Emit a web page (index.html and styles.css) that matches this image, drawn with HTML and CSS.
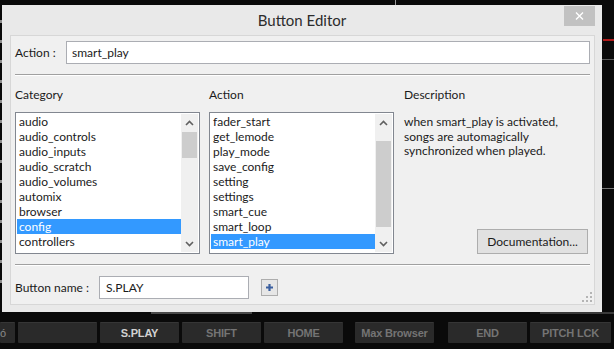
FILE: index.html
```html
<!DOCTYPE html>
<html lang="en">
  <head>
    <meta charset="UTF-8" />
    <meta name="viewport" content="width=device-width, initial-scale=1.0" />
    <title>Button Editor</title>
    <link rel="stylesheet" href="styles.css">
  </head>
  <body>
    <!-- bits of the skin visible behind the dialog -->
    <div class="skin-line skin-top"></div>
    <div class="skin-line skin-left"></div>
    <div class="skin-line skin-red"></div>
    <div class="skin-line skin-right-a"></div>
    <div class="skin-line skin-right-b"></div>
    <div class="skin-line skin-under-a"></div>
    <div class="skin-line skin-under-b"></div>

    <div class="dialog">
      <div class="titlebar">
        <span class="title">Button Editor</span>
        <button class="close" title="Close">
          <svg width="9" height="8" viewBox="0 0 9 8">
            <path d="M1 0.5 L8 7.5 M8 0.5 L1 7.5" stroke="#fff" stroke-width="1.4" fill="none" />
          </svg>
        </button>
      </div>

      <div class="panel">
        <div class="field-row">
          <label class="field-label action-label" for="action">Action :</label>
          <input class="text-input action-input" id="action" type="text" value="smart_play" />
        </div>

        <div class="divider"></div>

        <div class="columns">
          <div class="col">
            <div class="col-title">Category</div>
            <div class="listbox">
              <ul class="items">
                <li>audio</li>
                <li>audio_controls</li>
                <li>audio_inputs</li>
                <li>audio_scratch</li>
                <li>audio_volumes</li>
                <li>automix</li>
                <li>browser</li>
                <li class="selected">config</li>
                <li>controllers</li>
              </ul>
              <div class="scrollbar">
                <div class="scroll-btn">
                  <svg width="9" height="6" viewBox="0 0 9 6"><path d="M1 5 L4.5 1.5 L8 5" stroke="#606060" stroke-width="1.6" fill="none" /></svg>
                </div>
                <div class="scroll-track"><div class="thumb thumb-category"></div></div>
                <div class="scroll-btn">
                  <svg width="9" height="6" viewBox="0 0 9 6"><path d="M1 1 L4.5 4.5 L8 1" stroke="#606060" stroke-width="1.6" fill="none" /></svg>
                </div>
              </div>
            </div>
          </div>

          <div class="col">
            <div class="col-title">Action</div>
            <div class="listbox">
              <ul class="items">
                <li>fader_start</li>
                <li>get_lemode</li>
                <li>play_mode</li>
                <li>save_config</li>
                <li>setting</li>
                <li>settings</li>
                <li>smart_cue</li>
                <li>smart_loop</li>
                <li class="selected">smart_play</li>
              </ul>
              <div class="scrollbar">
                <div class="scroll-btn">
                  <svg width="9" height="6" viewBox="0 0 9 6"><path d="M1 5 L4.5 1.5 L8 5" stroke="#606060" stroke-width="1.6" fill="none" /></svg>
                </div>
                <div class="scroll-track"><div class="thumb thumb-action"></div></div>
                <div class="scroll-btn">
                  <svg width="9" height="6" viewBox="0 0 9 6"><path d="M1 1 L4.5 4.5 L8 1" stroke="#606060" stroke-width="1.6" fill="none" /></svg>
                </div>
              </div>
            </div>
          </div>

          <div class="col col-desc">
            <div class="col-title">Description</div>
            <p class="desc-text">when smart_play is activated,<br />songs are automagically<br />synchronized when played.</p>
            <button class="win-btn doc-btn">Documentation...</button>
          </div>
        </div>

        <div class="divider divider-bottom"></div>

        <div class="field-row name-row">
          <label class="field-label name-label" for="button-name">Button name :</label>
          <input class="text-input name-input" id="button-name" type="text" value="S.PLAY" />
          <button class="add-btn" title="Add">
            <svg width="9" height="9" viewBox="0 0 9 9"><path d="M4.5 1 V8 M1 4.5 H8" stroke="#3b5f9f" stroke-width="2.2" fill="none" /></svg>
          </button>
        </div>

        <svg class="grip" width="10" height="10" viewBox="0 0 10 10">
          <rect x="8" y="0" width="2" height="2" fill="#b4b4b4" />
          <rect x="4" y="4" width="2" height="2" fill="#b4b4b4" />
          <rect x="8" y="4" width="2" height="2" fill="#b4b4b4" />
          <rect x="0" y="8" width="2" height="2" fill="#b4b4b4" />
          <rect x="4" y="8" width="2" height="2" fill="#b4b4b4" />
          <rect x="8" y="8" width="2" height="2" fill="#b4b4b4" />
        </svg>
      </div>
    </div>

    <div class="deck-bar">
      <div class="deck-btn deck-cut">ó</div>
      <div class="deck-btn"></div>
      <div class="deck-btn active">S.PLAY</div>
      <div class="deck-btn">SHIFT</div>
      <div class="deck-btn">HOME</div>
      <div class="deck-btn deck-max">Max Browser</div>
      <div class="deck-btn deck-end">END</div>
      <div class="deck-btn deck-pitch">PITCH LCK</div>
    </div>
  </body>
</html>
```

FILE: styles.css
```css
body {
  margin: 0;
  width: 614px;
  height: 349px;
  overflow: hidden;
  position: relative;
  background-color: #0a0a0a;
  font-family: "Lato", "Segoe UI", sans-serif;
  font-size: 12px;
  color: #1b1b1b;
}

/* skin behind the dialog */
.skin-line {
  position: absolute;
  background-color: #5a5a5a;
}

.skin-top {
  left: 395px;
  top: 0;
  width: 1px;
  height: 6px;
  background-color: #9a9a9a;
}

.skin-left {
  left: 0;
  top: 20px;
  width: 2px;
  height: 280px;
  background: repeating-linear-gradient(to bottom, #8c8c8c 0 3px, transparent 3px 20px);
}

.skin-red {
  left: 603px;
  top: 39px;
  width: 11px;
  height: 2px;
  background-color: #b01a1a;
}

.skin-right-a {
  left: 602px;
  top: 59px;
  width: 12px;
  height: 1px;
}

.skin-right-b {
  left: 602px;
  top: 188px;
  width: 12px;
  height: 1px;
  background-color: #777;
}

.skin-under-a {
  left: 151px;
  top: 312px;
  width: 101px;
  height: 2px;
  background-color: #4a4a4a;
}

.skin-under-b {
  left: 540px;
  top: 312px;
  width: 74px;
  height: 2px;
  background-color: #3a3a3a;
}

/* dialog */
.dialog {
  position: relative;
  margin: 5px 0 0 2px;
  width: 600px;
  height: 307px;
  background-color: #e9e9e9;
}

.titlebar {
  height: 30px;
  display: flex;
  align-items: center;
  justify-content: center;
  position: relative;
}

.title {
  font-size: 15px;
  color: #2c2c2c;
}

.close {
  position: absolute;
  top: 1px;
  right: 7px;
  width: 31px;
  height: 20px;
  padding: 0;
  border: none;
  background-color: #c1c1c1;
  display: flex;
  align-items: center;
  justify-content: center;
}

.panel {
  position: relative;
  margin: 0 7px 0 8px;
  height: 270px;
  box-sizing: border-box;
  border: 1px solid #d7d7d7;
  background-color: #f0f0f0;
  padding: 5px 4px 5px 4px;
}

.field-row {
  display: flex;
  align-items: center;
}

.field-label {
  flex-shrink: 0;
}

.action-label {
  width: 51px;
}

.name-label {
  width: 84px;
}

.text-input {
  height: 23px;
  box-sizing: border-box;
  border: 1px solid #abadb3;
  background-color: #fff;
  padding: 0 0 0 5px;
  font: inherit;
  color: #1b1b1b;
  outline: none;
}

.action-input {
  flex: 1;
}

.name-input {
  width: 150px;
  padding-left: 6px;
}

.add-btn {
  margin-left: 12px;
  width: 17px;
  height: 17px;
  padding: 0;
  box-sizing: border-box;
  border: 1px solid #adadad;
  background-color: #e6e6e6;
  display: flex;
  align-items: center;
  justify-content: center;
}

.divider {
  margin-top: 10px;
  border-top: 1px solid #a0a0a0;
  border-bottom: 1px solid #fff;
}

.name-row {
  margin-top: 10px;
}

.columns {
  display: grid;
  grid-template-columns: 185px 185px 1fr;
  column-gap: 9px;
  margin-top: 11px;
}

.col-title {
  height: 15px;
  line-height: 15px;
  margin-bottom: 10px;
}

.listbox {
  height: 142px;
  box-sizing: border-box;
  border: 1px solid #828790;
  background-color: #fff;
  padding: 1px;
  display: flex;
}

.items {
  list-style: none;
  margin: 0;
  padding: 0;
  flex: 1;
  min-width: 0;
}

.items li {
  height: 15px;
  line-height: 15px;
  padding-left: 2px;
  white-space: nowrap;
  overflow: hidden;
}

.items li.selected {
  background-color: #3399ff;
  color: #fff;
}

.scrollbar {
  width: 17px;
  background-color: #f0f0f0;
  display: flex;
  flex-direction: column;
}

.scroll-btn {
  height: 17px;
  display: flex;
  align-items: center;
  justify-content: center;
}

.scroll-track {
  flex: 1;
  padding: 0 1px;
}

.thumb {
  background-color: #cdcdcd;
}

.thumb-category {
  margin-top: 1px;
  height: 26px;
}

.thumb-action {
  margin-top: 10px;
  height: 86px;
}

.col-desc {
  display: flex;
  flex-direction: column;
  padding-left: 1px;
}

.desc-text {
  margin: 3px 0 0;
  line-height: 14.5px;
}

.win-btn {
  box-sizing: border-box;
  border: 1px solid #adadad;
  background-color: #e1e1e1;
  font: inherit;
  color: #1b1b1b;
  padding: 0;
}

.doc-btn {
  margin-top: auto;
  align-self: flex-end;
  margin-right: 2px;
  width: 111px;
  height: 25px;
}

.grip {
  position: absolute;
  right: 2px;
  bottom: 2px;
}

/* deck buttons under the dialog */
.deck-bar {
  margin-top: 10px;
  display: flex;
  gap: 3px;
  height: 21px;
}

.deck-btn {
  width: 79px;
  flex-shrink: 0;
  box-sizing: border-box;
  background-color: #2a2a2a;
  border-top: 1px solid #363636;
  border-radius: 1px;
  color: #747474;
  font: bold 11px "Liberation Sans", Arial, sans-serif;
  letter-spacing: -0.2px;
  display: flex;
  align-items: center;
  justify-content: center;
}

.deck-btn.active {
  color: #d2d2d2;
}

.deck-cut {
  width: 15px;
  justify-content: flex-start;
  padding-left: 0;
  font-weight: normal;
  color: #8a8a8a;
}

.deck-max {
  margin-left: 9px;
}

.deck-end {
  margin-left: 11px;
}

.deck-pitch {
  width: 81px;
}
```
